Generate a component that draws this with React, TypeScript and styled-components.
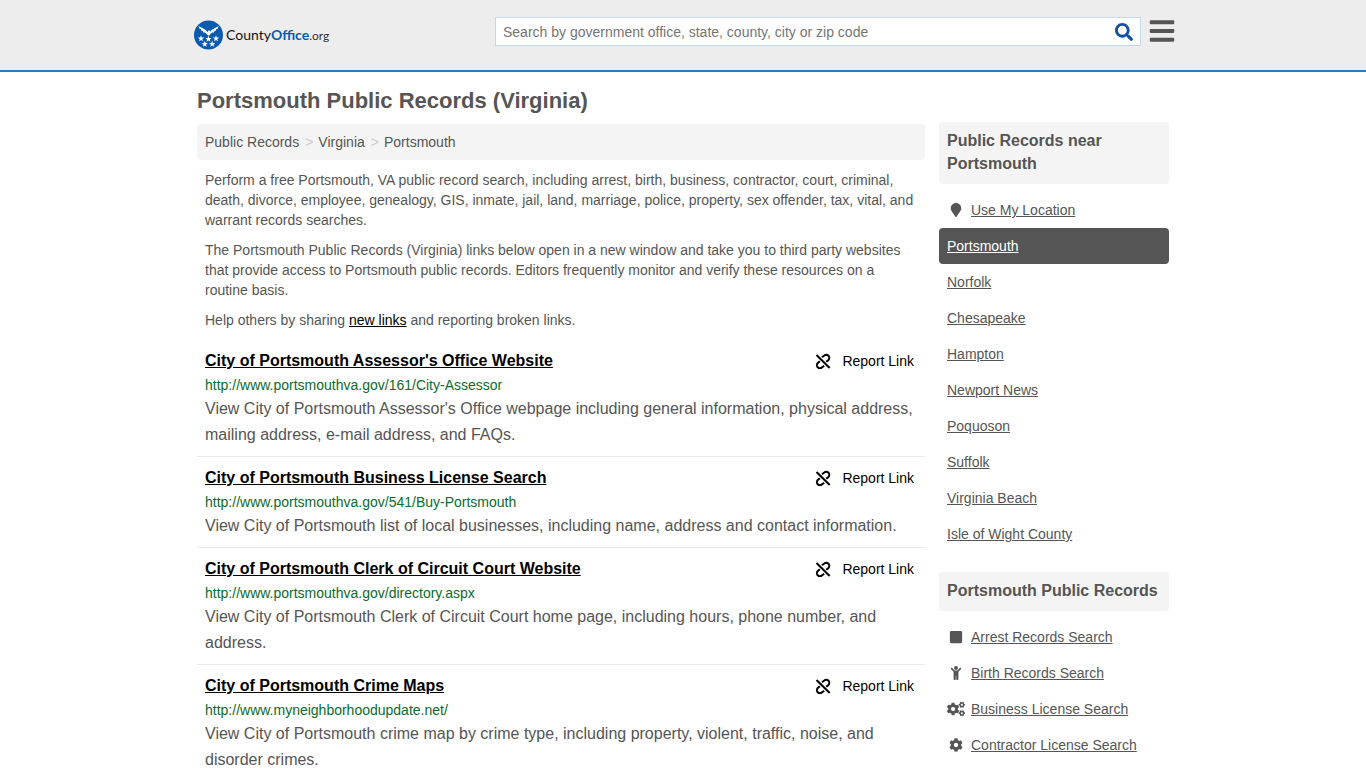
import React from "react";
import styled, { createGlobalStyle } from "styled-components";
import { FaBars, FaChild, FaCog, FaCogs, FaMapMarker, FaSearch, FaSquare } from "react-icons/fa";

const Global = createGlobalStyle`
  *, *::before, *::after { box-sizing: border-box; }
  body {
    margin: 0;
    background: #fff;
    color: #555;
    font: 14px/20px "Liberation Sans", Arial, sans-serif;
  }
  a { color: inherit; }
  h1, h2, h3, p, ul, ol { margin: 0; padding: 0; }
  ul, ol { list-style: none; }
`;

const Header = styled.header`
  background: #ededed;
  border-bottom: 2px solid #337ab7;
`;

const HeaderInner = styled.div`
  display: flex;
  align-items: flex-start;
  max-width: 986px;
  height: 70px;
  margin: 0 auto;
  padding: 17px 0 0 4px;
`;

const LogoLink = styled.a`
  display: block;
  height: 36px;
  margin-right: auto;
`;

const SearchForm = styled.form`
  display: flex;
  flex: 0 1 646px;
  height: 29px;
  margin-right: 7px;
  background: #fff;
  border: 1px solid #c5d9ea;
`;

const SearchInput = styled.input`
  flex: 1;
  min-width: 0;
  padding: 0 7px;
  border: 0;
  outline: 0;
  background: transparent;
  color: #555;
  font: inherit;
  &::placeholder { color: #757575; opacity: 1; }
`;

const SearchButton = styled.button`
  display: flex;
  align-items: center;
  padding: 0 7px;
  border: 0;
  background: transparent;
  color: #0f53a0;
  cursor: pointer;
`;

const MenuButton = styled.button`
  display: flex;
  padding: 0;
  border: 0;
  background: transparent;
  color: #555;
  cursor: pointer;
`;

const Page = styled.div`
  display: grid;
  grid-template-columns: minmax(0, 1fr) 230px;
  column-gap: 14px;
  max-width: 972px;
  margin: 0 auto;
  padding-top: 14px;
`;

const Title = styled.h1`
  grid-column: 1 / -1;
  font-size: 22px;
  line-height: 30px;
  font-weight: bold;
`;

const Main = styled.main`
  padding-top: 8px;
`;

const Crumbs = styled.ol`
  display: flex;
  padding: 8px;
  border-radius: 4px;
  background: #f4f4f4;
  li + li::before {
    content: ">";
    padding: 0 5px 0 6px;
    color: #ccc;
  }
  a { text-decoration: none; }
`;

const Intro = styled.div`
  display: grid;
  gap: 10px;
  padding: 10px 8px;
`;

const InkLink = styled.a`
  color: #000;
`;

const Result = styled.li`
  padding: 8px;
  & + & { border-top: 1px solid #e9e9e9; }
`;

const ResultHead = styled.div`
  display: flex;
  justify-content: space-between;
  align-items: center;
  padding-right: 3px;
`;

const ResultTitle = styled.h2`
  font-size: 16px;
  line-height: 26px;
  a { color: #000; }
`;

const ReportLink = styled.a`
  display: flex;
  align-items: center;
  gap: 11px;
  color: #000;
  text-decoration: none;
`;

const ResultUrl = styled.p`
  line-height: 22px;
  color: #0b6b2c;
`;

const ResultText = styled.p`
  font-size: 16px;
  line-height: 26px;
`;

const Side = styled.aside`
  display: grid;
  align-content: start;
  gap: 20px;
  padding-top: 6px;
`;

const SideTitle = styled.h3`
  margin-bottom: 8px;
  padding: 7px 8px 9px;
  border-radius: 4px;
  background: #f4f4f4;
  font-size: 16px;
  line-height: 23px;
`;

const SideItem = styled.li<{ $active?: boolean }>`
  display: flex;
  align-items: center;
  gap: 6px;
  padding: 8px;
  border-radius: 4px;
  background: ${(p) => (p.$active ? "#555" : "transparent")};
  color: ${(p) => (p.$active ? "#fff" : "inherit")};
`;

const IconSlot = styled.span`
  display: flex;
  justify-content: center;
  width: 18px;
`;

const STAR = "M0-3.200.800-1 3.200-1 1.300.500 2 2.800 0 1.400-2 2.800-1.300.500-3.200-1-.800-1Z";

const Logo = () => (
  <svg width="140" height="36" viewBox="0 0 140 36" role="img" aria-label="CountyOffice.org">
    <circle cx="14.500" cy="18" r="14.500" fill="#0a5ab0" />
    <g fill="#fff">
      <path d="M4.500 9 11.500 12.800 13.800 15.200 14.300 13.600 16.300 13.800 16 15 17.800 12.800 24.700 9 23.600 11.700 22.200 12.300 22 13.600 20.500 14 20 15.400 18.200 15.500 16.200 17.200 15.500 18.500 13.800 18.500 13 17.200 11 15.500 9.200 15.400 8.700 14 7.200 13.600 7 12.300 5.600 11.700Z" />
      <path transform="translate(7 21.500)" d={STAR} />
      <path transform="translate(14.500 22)" d={STAR} />
      <path transform="translate(22 21.500)" d={STAR} />
      <path transform="translate(10.800 27)" d={STAR} />
      <path transform="translate(18.200 27)" d={STAR} />
    </g>
    <text x="32" y="23" fontFamily="Lato, sans-serif" fontSize="14" fill="#111">
      County<tspan fill="#0a5ab0" fontWeight="bold">Office</tspan><tspan fill="#333" fontSize="12">.org</tspan>
    </text>
  </svg>
);

/* Chain link with its two loops cut by a diagonal slash. */
const BrokenLink = () => (
  <svg width="16" height="16" viewBox="0 0 16 16" fill="none" stroke="#000" strokeWidth="2" aria-hidden="true">
    <path d="M1.500 2 14.700 15" />
    <path d="M7 4.300 8.700 2.900C10.300 1.600 12.300 1.500 13.500 2.700 14.700 3.900 14.500 5.900 13.200 7.200L11.300 8.800" />
    <path d="M9.200 12.700 7.500 14.100C5.900 15.400 3.900 15.500 2.700 14.300 1.500 13.100 1.700 11.100 3 9.800L4.900 8.200" />
  </svg>
);

const results = [
  { title: "City of Portsmouth Assessor's Office Website", url: "http://www.portsmouthva.gov/161/City-Assessor", text: "View City of Portsmouth Assessor's Office webpage including general information, physical address, mailing address, e-mail address, and FAQs." },
  { title: "City of Portsmouth Business License Search", url: "http://www.portsmouthva.gov/541/Buy-Portsmouth", text: "View City of Portsmouth list of local businesses, including name, address and contact information." },
  { title: "City of Portsmouth Clerk of Circuit Court Website", url: "http://www.portsmouthva.gov/directory.aspx", text: "View City of Portsmouth Clerk of Circuit Court home page, including hours, phone number, and address." },
  { title: "City of Portsmouth Crime Maps", url: "http://www.myneighborhoodupdate.net/", text: "View City of Portsmouth crime map by crime type, including property, violent, traffic, noise, and disorder crimes." },
];

const places = ["Portsmouth", "Norfolk", "Chesapeake", "Hampton", "Newport News", "Poquoson", "Suffolk", "Virginia Beach", "Isle of Wight County"];

const searches = [
  { label: "Arrest Records Search", icon: <FaSquare size={14} /> },
  { label: "Birth Records Search", icon: <FaChild size={14} /> },
  { label: "Business License Search", icon: <FaCogs size={18} /> },
  { label: "Contractor License Search", icon: <FaCog size={14} /> },
];

export default function App() {
  return (
    <>
      <Global />
      <Header>
        <HeaderInner>
          <LogoLink href="#"><Logo /></LogoLink>
          <SearchForm role="search">
            <SearchInput aria-label="Search" placeholder="Search by government office, state, county, city or zip code" />
            <SearchButton type="button" aria-label="Search"><FaSearch size={18} /></SearchButton>
          </SearchForm>
          <MenuButton type="button" aria-label="Menu"><FaBars size={28} /></MenuButton>
        </HeaderInner>
      </Header>
      <Page>
        <Title>Portsmouth Public Records (Virginia)</Title>
        <Main>
          <nav aria-label="Breadcrumb">
            <Crumbs>
              <li><a href="#">Public Records</a></li>
              <li><a href="#">Virginia</a></li>
              <li><a href="#">Portsmouth</a></li>
            </Crumbs>
          </nav>
          <Intro>
            <p>Perform a free Portsmouth, VA public record search, including arrest, birth, business, contractor, court, criminal, death, divorce, employee, genealogy, GIS, inmate, jail, land, marriage, police, property, sex offender, tax, vital, and warrant records searches.</p>
            <p>The Portsmouth Public Records (Virginia) links below open in a new window and take you to third party websites that provide access to Portsmouth public records. Editors frequently monitor and verify these resources on a routine basis.</p>
            <p>Help others by sharing <InkLink href="#">new links</InkLink> and reporting broken links.</p>
          </Intro>
          <ul>
            {results.map((r) => (
              <Result key={r.title}>
                <ResultHead>
                  <ResultTitle><a href="#">{r.title}</a></ResultTitle>
                  <ReportLink href="#"><BrokenLink />Report Link</ReportLink>
                </ResultHead>
                <ResultUrl>{r.url}</ResultUrl>
                <ResultText>{r.text}</ResultText>
              </Result>
            ))}
          </ul>
        </Main>
        <Side>
          <section>
            <SideTitle>Public Records near Portsmouth</SideTitle>
            <ul>
              <SideItem><IconSlot><FaMapMarker size={14} /></IconSlot><a href="#">Use My Location</a></SideItem>
              {places.map((p, i) => (
                <SideItem key={p} $active={i === 0}><a href="#">{p}</a></SideItem>
              ))}
            </ul>
          </section>
          <section>
            <SideTitle>Portsmouth Public Records</SideTitle>
            <ul>
              {searches.map((s) => (
                <SideItem key={s.label}><IconSlot>{s.icon}</IconSlot><a href="#">{s.label}</a></SideItem>
              ))}
            </ul>
          </section>
        </Side>
      </Page>
    </>
  );
}
